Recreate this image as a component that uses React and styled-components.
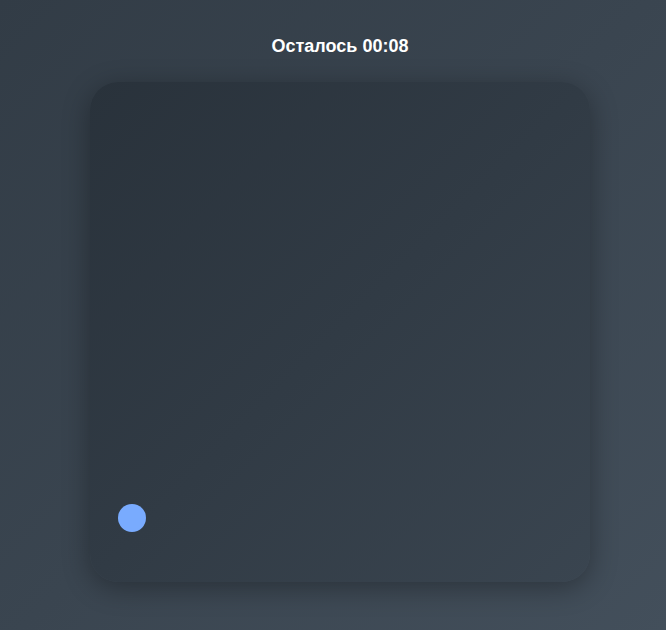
import React from "react";
import styled, { createGlobalStyle } from "styled-components";

const GlobalStyle = createGlobalStyle`
  html, body {
    margin: 0;
    padding: 0;
  }
  body {
    min-height: 630px;
    background: linear-gradient(135deg, #323c46 0%, #3a4550 50%, #434f5b 100%);
    font-family: "Liberation Sans", Arial, sans-serif;
  }
`;

const Page = styled.div`
  display: flex;
  flex-direction: column;
  align-items: center;
  padding: 36px 0 0 14px;
  min-height: 630px;
  box-sizing: border-box;
`;

const Timer = styled.div`
  color: #ffffff;
  font-size: 18px;
  font-weight: bold;
  line-height: 21px;
  height: 21px;
`;

const Field = styled.div`
  margin-top: 25px;
  width: 500px;
  height: 500px;
  border-radius: 28px;
  background: linear-gradient(135deg, #29323b 0%, #313b45 50%, #3a4550 100%);
  box-shadow: 0 6px 28px rgba(0, 0, 0, 0.32);
  display: flex;
  align-items: flex-end;
  padding: 0 0 50px 28px;
  box-sizing: border-box;
`;

const Dot = styled.div`
  width: 28px;
  height: 28px;
  border-radius: 50%;
  background: ${(props) => props.$color};
`;

function App() {
  return (
    <>
      <GlobalStyle />
      <Page>
        <Timer>Осталось 00:08</Timer>
        <Field>
          <Dot $color="#79abfe" />
        </Field>
      </Page>
    </>
  );
}

export default App;
